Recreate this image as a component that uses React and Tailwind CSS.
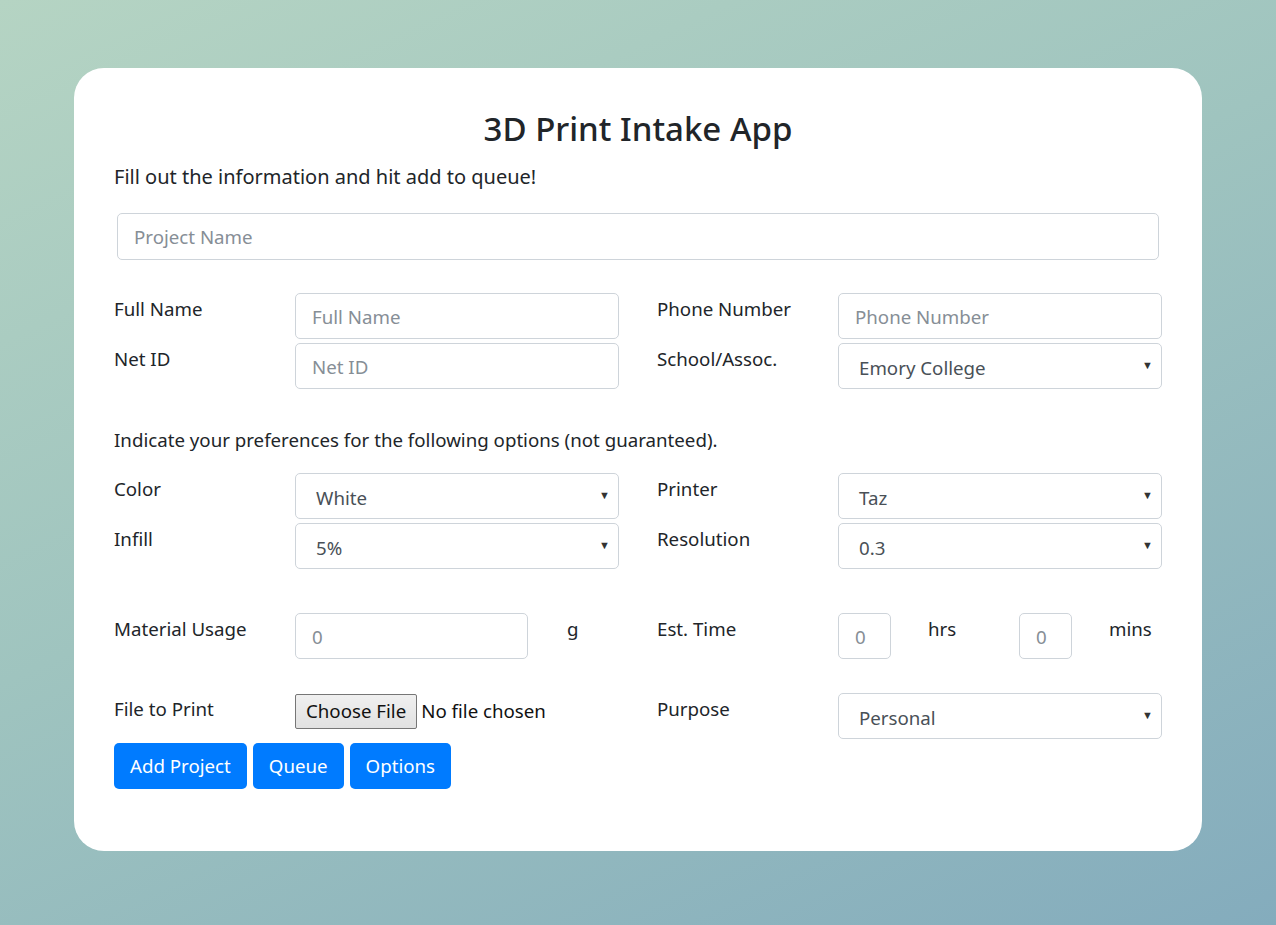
const font = { fontFamily: '"Noto Sans", "Open Sans", sans-serif' }

const grid = 'grid grid-cols-[181px_324px_219px_324px]'

function Label({ children, right = false }) {
  return (
    <label className={`pt-[2px] text-[18.7px] leading-[27px] text-[#212529] ${right ? 'pl-[38px]' : ''}`}>
      {children}
    </label>
  )
}

function TextInput({ placeholder, className = '' }) {
  return (
    <input
      placeholder={placeholder}
      className={`h-[46px] rounded-[5px] border border-[#ced4da] bg-white px-[16px] text-[18.7px] text-[#495057] outline-none placeholder:text-[#868e96] ${className}`}
    />
  )
}

function Select({ value }) {
  return (
    <div className="relative h-[46px] w-full rounded-[5px] border border-[#ced4da] bg-white">
      <div className="flex h-full items-center pl-[20px] pt-[4px] text-[18.7px] text-[#495057]">{value}</div>
      <span className="absolute right-[8px] top-[13px] text-[11px] text-[#333]">▼</span>
    </div>
  )
}

export default function App() {
  return (
    <div
      style={font}
      className="min-h-[925px] w-full bg-[linear-gradient(155deg,#b5d4c3_0%,#9fc4bf_45%,#84acbd_100%)] pt-[68px]"
    >
      <div className="mx-auto w-[1128px] rounded-[30px] bg-white px-[40px] pt-[41px] pb-[62px]">
        <h1 className="text-center text-[33px] font-medium leading-[40px] text-[#212529]">3D Print Intake App</h1>
        <p className="mt-[14px] text-[20px] leading-[27px] text-[#212529]">Fill out the information and hit add to queue!</p>

        <div className="mx-[3px] mt-[23px]">
          <TextInput placeholder="Project Name" className="h-[47px] w-full" />
        </div>

        {/* Contact */}
        <div className={`mt-[33px] ${grid} gap-y-[4px]`}>
          <Label>Full Name</Label>
          <TextInput placeholder="Full Name" className="w-full" />
          <Label right>Phone Number</Label>
          <TextInput placeholder="Phone Number" className="w-full" />
          <Label>Net ID</Label>
          <TextInput placeholder="Net ID" className="w-full" />
          <Label right>School/Assoc.</Label>
          <Select value="Emory College" />
        </div>

        <p className="mt-[37px] text-[18.7px] leading-[27px] text-[#212529]">
          Indicate your preferences for the following options (not guaranteed).
        </p>

        <div className={`mt-[20px] ${grid} gap-y-[4px]`}>
          <Label>Color</Label>
          <Select value="White" />
          <Label right>Printer</Label>
          <Select value="Taz" />
          <Label>Infill</Label>
          <Select value="5%" />
          <Label right>Resolution</Label>
          <Select value="0.3" />
        </div>

        {/* Material / time */}
        <div className={`mt-[44px] ${grid}`}>
          <Label>Material Usage</Label>
          <div className="grid grid-cols-[272px_1fr]">
            <TextInput placeholder="0" className="w-[233px]" />
            <Label>g</Label>
          </div>
          <Label right>Est. Time</Label>
          <div className="grid grid-cols-[90px_91px_90px_1fr]">
            <TextInput placeholder="0" className="w-[53px] px-[12px]" />
            <Label>hrs</Label>
            <TextInput placeholder="0" className="w-[53px] px-[12px]" />
            <Label>mins</Label>
          </div>
        </div>

        {/* File / purpose */}
        <div className={`mt-[34px] ${grid}`}>
          <Label>File to Print</Label>
          <div className="flex items-start pt-[1px]">
            <span className="flex h-[35px] items-center rounded-[2px] border border-[#767676] bg-[linear-gradient(#f0f0f0,#e1e1e1)] px-[10px] text-[18.7px] text-[#111]">
              Choose File
            </span>
            <span className="ml-[4px] pt-[3px] text-[18.7px] leading-[27px] text-[#111]">No file chosen</span>
          </div>
          <Label right>Purpose</Label>
          <Select value="Personal" />
        </div>

        <div className="mt-[4px] flex gap-[6px]">
          <button className="h-[46px] rounded-[5px] bg-[#007bff] px-[16px] text-[18.7px] text-white">Add Project</button>
          <button className="h-[46px] rounded-[5px] bg-[#007bff] px-[16px] text-[18.7px] text-white">Queue</button>
          <button className="h-[46px] rounded-[5px] bg-[#007bff] px-[16px] text-[18.7px] text-white">Options</button>
        </div>
      </div>
    </div>
  )
}
